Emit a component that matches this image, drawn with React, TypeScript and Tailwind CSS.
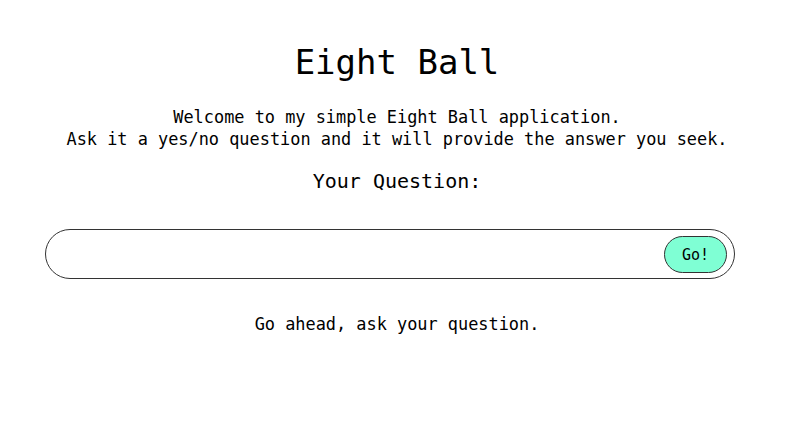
import { useState } from "react";

const answers = [
  "It is certain.",
  "Without a doubt.",
  "Ask again later.",
  "Don't count on it.",
  "Very doubtful.",
];

export default function App() {
  const [question, setQuestion] = useState("");
  const [answer, setAnswer] = useState("Go ahead, ask your question.");

  const handleAsk = (e: React.FormEvent) => {
    e.preventDefault();
    if (!question.trim()) return;
    setAnswer(answers[Math.floor(Math.random() * answers.length)]);
  };

  return (
    <div className="min-h-screen bg-white pr-[4px] text-black font-['DejaVu_Sans_Mono',monospace] text-[16.9px]">
      <h1 className="pt-[42px] text-center text-[34px] leading-[40px]">Eight Ball</h1>
      <p className="mt-[24px] text-center leading-[22px]">
        Welcome to my simple Eight Ball application.
        <br />
        Ask it a yes/no question and it will provide the answer you seek.
      </p>
      <h2 className="mt-[19px] text-center text-[20px] leading-[24px]">Your Question:</h2>
      <form
        onSubmit={handleAsk}
        className="ml-[45px] mt-[36px] flex h-[50px] w-[690px] items-center rounded-full border border-[#333] pl-5 pr-[7px]"
      >
        <input
          value={question}
          onChange={(e) => setQuestion(e.target.value)}
          className="h-full flex-1 bg-transparent outline-none"
        />
        <button
          type="submit"
          className="h-[37px] w-[63px] rounded-full border border-[#333] bg-[#7fffd4] pt-[3px] text-[15px]"
        >
          Go!
        </button>
      </form>
      <p className="mt-[33px] text-center leading-[24px]">{answer}</p>
    </div>
  );
}
